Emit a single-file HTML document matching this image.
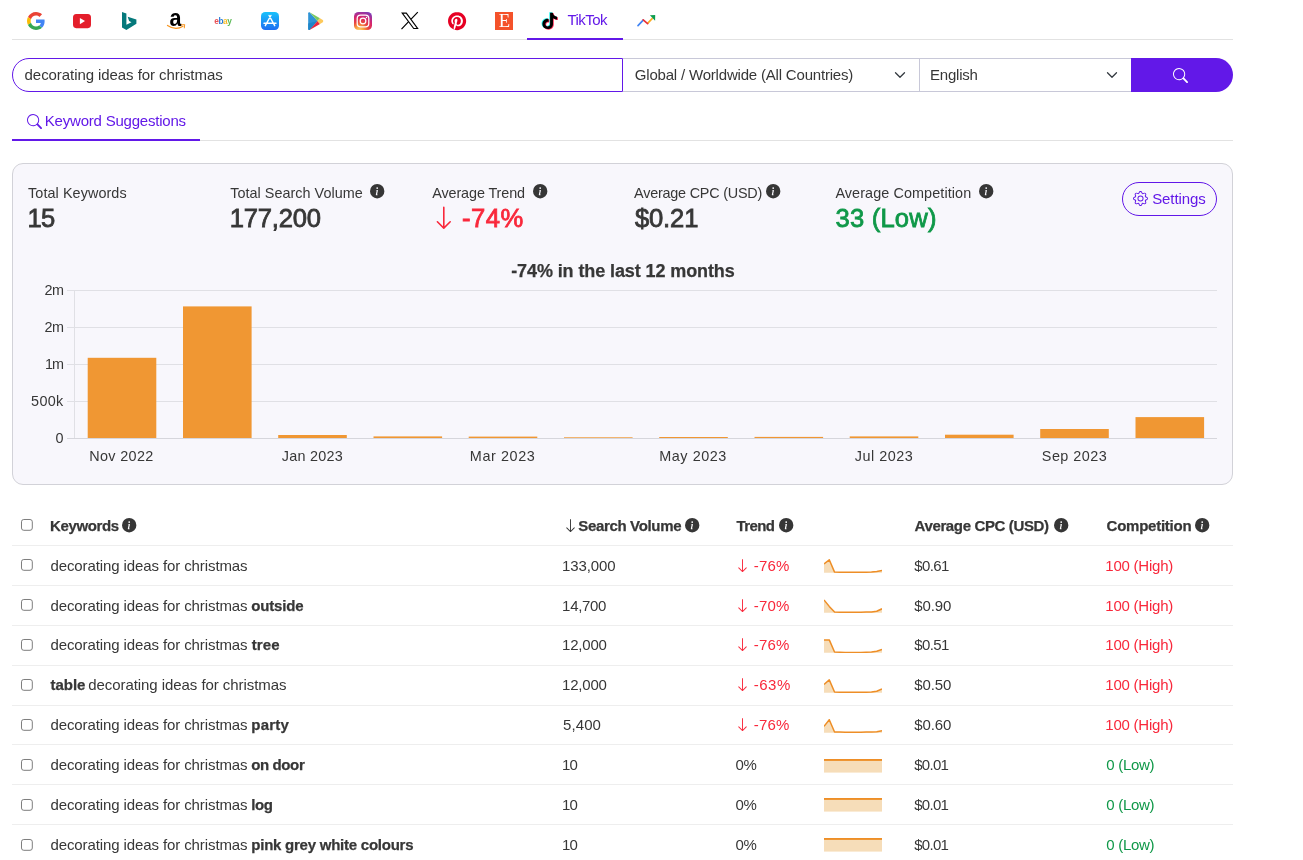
<!DOCTYPE html>
<html lang="en">
<head>
<meta charset="utf-8">
<title>Keyword Tool - TikTok</title>
<style>
html,body{margin:0;padding:0;background:#fff;}
body{will-change:transform;width:1303px;height:860px;position:relative;overflow:hidden;font-family:"Liberation Sans",Arial,sans-serif;color:#373737;}
.t{position:absolute;white-space:pre;line-height:20px;height:20px;}
.t b{font-weight:700;}
.big{-webkit-text-stroke:0.8px currentColor;}
.bd{-webkit-text-stroke:0.25px currentColor;}
.a{position:absolute;}
.ln{position:absolute;height:1px;background:#eeeeee;left:12px;width:1221px;}
svg{position:absolute;overflow:visible;}
</style>
</head>
<body>

<nav class="sources">
<div class="a" style="left:12px;top:39px;width:1221px;height:1px;background:#e2e2e2"></div>
<div class="a" style="left:527px;top:38px;width:96px;height:2px;background:#6218e8"></div>
<svg style="left:27px;top:12px" width="18" height="18" viewBox="0 0 48 48"><path fill="#EA4335" d="M24 9.5c3.54 0 6.71 1.22 9.21 3.6l6.85-6.85C35.9 2.38 30.47 0 24 0 14.62 0 6.51 5.38 2.56 13.22l7.98 6.19C12.43 13.72 17.74 9.5 24 9.5z"/><path fill="#4285F4" d="M46.98 24.55c0-1.57-.15-3.09-.38-4.55H24v9.02h12.94c-.58 2.96-2.26 5.48-4.78 7.18l7.73 6c4.51-4.18 7.09-10.36 7.09-17.65z"/><path fill="#FBBC05" d="M10.53 28.59c-.48-1.45-.76-2.99-.76-4.59s.27-3.14.76-4.59l-7.98-6.19C.92 16.46 0 20.12 0 24c0 3.88.92 7.54 2.56 10.78l7.97-6.19z"/><path fill="#34A853" d="M24 48c6.48 0 11.93-2.13 15.89-5.81l-7.73-6c-2.15 1.45-4.92 2.3-8.16 2.3-6.26 0-11.57-4.22-13.47-9.91l-7.98 6.19C6.51 42.62 14.62 48 24 48z"/></svg>
<svg style="left:73px;top:13.8px" width="18" height="14.2" viewBox="0 0 18 14.2"><rect x="0" y="0" width="18" height="14.2" rx="3.2" ry="3.6" fill="#e41e2b"/><path d="M6.9 3.9 L12 7.1 L6.9 10.3 Z" fill="#fff"/></svg>
<svg style="left:121.7px;top:11.8px" width="14.4" height="18" viewBox="0 0 14.4 18"><path fill="#05797b" d="M0 0 L4.4 1.6 L4.4 12.8 L9.5 10.2 L7.1 9 L5.7 4.8 L14.4 7.55 L14.4 11.85 L4.4 18 L0 15.5 Z"/></svg>
<svg style="left:167px;top:10px" width="18" height="20" viewBox="0 0 18 20"><text x="2.6" y="16.1" font-family="'Liberation Sans',Arial,sans-serif" font-weight="700" font-size="24" fill="#000" textLength="12" lengthAdjust="spacingAndGlyphs">a</text><path d="M0.5 15.4 Q8.5 20.8 16 16.2" fill="none" stroke="#f7941d" stroke-width="1.2" stroke-linecap="round"/><path d="M14.4 14.9 L17.7 14.6 L17.3 17.9" fill="none" stroke="#f7941d" stroke-width="1" stroke-linecap="round" stroke-linejoin="round"/></svg>
<svg style="left:213.5px;top:14.5px" width="20" height="14" viewBox="0 0 20 14"><text y="9.1" font-family="'Liberation Sans',Arial,sans-serif" font-weight="700" font-size="8.3" letter-spacing="-0.45" fill-opacity="0.85"><tspan x="0.3" fill="#e53238">e</tspan><tspan fill="#0064d2">b</tspan><tspan fill="#f5af02">a</tspan><tspan fill="#3bab35">y</tspan></text></svg>
<svg style="left:261px;top:12px" width="18" height="18" viewBox="0 0 18 18"><defs><linearGradient id="gas" x1="0" y1="0" x2="0" y2="1"><stop offset="0" stop-color="#19c2fb"/><stop offset="1" stop-color="#1d6ef2"/></linearGradient></defs><rect width="18" height="18" rx="4.2" fill="url(#gas)"/><path d="M9.9 3.5 L4.3 13.7 M8.1 3.5 L13.7 13.7 M3 11.2 H15" fill="none" stroke="#fff" stroke-width="1.45" stroke-linecap="round"/></svg>
<svg style="left:308.3px;top:11.8px" width="15.4" height="18.2" viewBox="0 0 15.4 18.2"><path d="M0.2 1.2 Q0.2 0 1.6 0.3 L9.5 9.1 L1.6 17.9 Q0.2 18.2 0.2 17 Z" fill="#2e93d6"/><path d="M0.2 11.5 L9.5 9.1 L1.6 17.9 Q0.2 18.2 0.2 17 Z" fill="#1f86c9"/><path d="M1.6 0.3 L12 6.3 L9.5 9.1 Z" fill="#7cc95f"/><path d="M1.6 17.9 L12 11.9 L9.5 9.1 Z" fill="#e8253d"/><path d="M12 6.3 L14.8 8 Q15.8 9.1 14.8 10.2 L12 11.9 L9.5 9.1 Z" fill="#fdc95a"/></svg>
<svg style="left:354px;top:12px" width="18" height="18" viewBox="0 0 18 18"><defs><radialGradient id="gig" cx="0.3" cy="1.05" r="1.15"><stop offset="0" stop-color="#fed576"/><stop offset="0.22" stop-color="#f9a13f"/><stop offset="0.45" stop-color="#e8443f"/><stop offset="0.68" stop-color="#d5246f"/><stop offset="1" stop-color="#7c3bb8"/></radialGradient></defs><rect width="18" height="18" rx="4.6" fill="url(#gig)"/><rect x="3.2" y="3.2" width="11.6" height="11.6" rx="3.3" fill="none" stroke="#fff" stroke-width="1.25"/><circle cx="9" cy="9" r="2.85" fill="none" stroke="#fff" stroke-width="1.25"/><circle cx="12.5" cy="5.5" r="0.75" fill="#fff"/></svg>
<svg style="left:401px;top:12px" width="18" height="18" viewBox="0 0 18 18"><path d="M16.8 0.2 L10.1 7.1 M0.5 17.2 L7.6 9.6" stroke="#000" stroke-width="1.2" fill="none"/><path d="M1.2 1.14 L5.3 1.14 L16.6 16.5 L12.7 16.5 Z" fill="#fff" stroke="#000" stroke-width="1.15" stroke-linejoin="miter"/></svg>
<svg style="left:447.9px;top:11.8px" width="18.2" height="18.2" viewBox="0 0 24 24"><circle cx="12" cy="12" r="11.9" fill="#fff"/><path fill="#e60023" d="M12.017 0C5.396 0 .029 5.367.029 11.987c0 5.079 3.158 9.417 7.618 11.162-.105-.949-.199-2.403.041-3.439.219-.937 1.406-5.957 1.406-5.957s-.359-.72-.359-1.781c0-1.663.967-2.911 2.168-2.911 1.024 0 1.518.769 1.518 1.688 0 1.029-.653 2.567-.992 3.992-.285 1.193.6 2.165 1.775 2.165 2.128 0 3.768-2.245 3.768-5.487 0-2.861-2.063-4.869-5.008-4.869-3.41 0-5.409 2.562-5.409 5.199 0 1.033.394 2.143.889 2.741.099.12.112.225.085.345-.09.375-.293 1.199-.334 1.363-.053.225-.172.271-.401.165-1.495-.69-2.433-2.878-2.433-4.646 0-3.776 2.748-7.252 7.92-7.252 4.158 0 7.392 2.967 7.392 6.923 0 4.135-2.607 7.462-6.233 7.462-1.214 0-2.354-.629-2.758-1.379l-.749 2.848c-.269 1.045-1.004 2.352-1.498 3.146 1.123.345 2.306.535 3.55.535 6.607 0 11.985-5.365 11.985-11.987C23.97 5.39 18.592.026 11.985.026L12.017 0z"/></svg>
<svg style="left:495px;top:12px" width="18" height="18" viewBox="0 0 18 18"><rect width="18" height="18" fill="#f4522a"/><text x="3.7" y="14.9" font-family="'Liberation Serif','DejaVu Serif',serif" font-size="18" fill="#fff" textLength="11.4" lengthAdjust="spacingAndGlyphs">E</text></svg>
<svg style="left:541.8px;top:12px" width="16.2" height="17.8" viewBox="1.8 -0.4 21.4 24.8" preserveAspectRatio="none"><g transform="translate(12.5,12) scale(0.93,0.95) translate(-12.5,-12)"><path d="M12.525.02c1.31-.02 2.61-.01 3.91-.02.08 1.53.63 3.09 1.75 4.17 1.12 1.11 2.7 1.62 4.24 1.79v4.03c-1.44-.05-2.89-.35-4.2-.97-.57-.26-1.1-.59-1.62-.93-.01 2.92.01 5.84-.02 8.75-.08 1.4-.54 2.79-1.35 3.94-1.31 1.92-3.58 3.17-5.91 3.21-1.43.08-2.86-.31-4.08-1.03-2.02-1.19-3.44-3.37-3.65-5.71-.02-.5-.03-1-.01-1.49.18-1.9 1.12-3.72 2.58-4.96 1.66-1.44 3.98-2.13 6.15-1.72.02 1.48-.04 2.96-.04 4.44-.99-.32-2.15-.23-3.02.37-.63.41-1.11 1.04-1.36 1.75-.21.51-.15 1.07-.14 1.61.24 1.64 1.82 3.02 3.5 2.87 1.12-.01 2.19-.66 2.77-1.61.19-.33.4-.67.41-1.06.1-1.79.06-3.57.07-5.36.01-4.03-.01-8.05.02-12.07z" fill="#25f4ee" transform="translate(-1.15,-0.85)"/><path d="M12.525.02c1.31-.02 2.61-.01 3.91-.02.08 1.53.63 3.09 1.75 4.17 1.12 1.11 2.7 1.62 4.24 1.79v4.03c-1.44-.05-2.89-.35-4.2-.97-.57-.26-1.1-.59-1.62-.93-.01 2.92.01 5.84-.02 8.75-.08 1.4-.54 2.79-1.35 3.94-1.31 1.92-3.58 3.17-5.91 3.21-1.43.08-2.86-.31-4.08-1.03-2.02-1.19-3.44-3.37-3.65-5.71-.02-.5-.03-1-.01-1.49.18-1.9 1.12-3.72 2.58-4.96 1.66-1.44 3.98-2.13 6.15-1.72.02 1.48-.04 2.96-.04 4.44-.99-.32-2.15-.23-3.02.37-.63.41-1.11 1.04-1.36 1.75-.21.51-.15 1.07-.14 1.61.24 1.64 1.82 3.02 3.5 2.87 1.12-.01 2.19-.66 2.77-1.61.19-.33.4-.67.41-1.06.1-1.79.06-3.57.07-5.36.01-4.03-.01-8.05.02-12.07z" fill="#fe2c55" transform="translate(1.15,0.85)"/><path d="M12.525.02c1.31-.02 2.61-.01 3.91-.02.08 1.53.63 3.09 1.75 4.17 1.12 1.11 2.7 1.62 4.24 1.79v4.03c-1.44-.05-2.89-.35-4.2-.97-.57-.26-1.1-.59-1.62-.93-.01 2.92.01 5.84-.02 8.75-.08 1.4-.54 2.79-1.35 3.94-1.31 1.92-3.58 3.17-5.91 3.21-1.43.08-2.86-.31-4.08-1.03-2.02-1.19-3.44-3.37-3.65-5.71-.02-.5-.03-1-.01-1.49.18-1.9 1.12-3.72 2.58-4.96 1.66-1.44 3.98-2.13 6.15-1.72.02 1.48-.04 2.96-.04 4.44-.99-.32-2.15-.23-3.02.37-.63.41-1.11 1.04-1.36 1.75-.21.51-.15 1.07-.14 1.61.24 1.64 1.82 3.02 3.5 2.87 1.12-.01 2.19-.66 2.77-1.61.19-.33.4-.67.41-1.06.1-1.79.06-3.57.07-5.36.01-4.03-.01-8.05.02-12.07z" fill="#000"/></g></svg>
<svg style="left:636px;top:14px" width="20" height="14" viewBox="636 14 20 14"><path d="M638 25.6 L643.2 20.1" stroke="#4285f4" stroke-width="1.7" stroke-linecap="round"/><path d="M647.6 23.4 L652.6 18.2" stroke="#fbab23" stroke-width="1.7"/><path d="M643.2 19.8 L647.6 23.6" stroke="#ea3338" stroke-width="1.7" stroke-linecap="round"/><path d="M649.9 15.2 L655.2 15.1 L655.1 20.8 Z" fill="#0d9d4e"/></svg>

<div class="t" style="left:567.5px;top:10.2px;font-size:15px;color:#6218e8;letter-spacing:-0.54px;">TikTok</div>
</nav>
<div class="searchbar">
<div class="a" style="left:623px;top:58px;width:296px;height:32px;border:1px solid #c8c8d8;border-left:none;background:#fff"></div>
<div class="a" style="left:919px;top:58px;width:212px;height:32px;border:1px solid #c8c8d8;border-right:none;background:#fff"></div>
<div class="a" style="left:12px;top:58px;width:609px;height:32px;border:1px solid #6218e8;border-radius:17px 0 0 17px;background:#fff"></div>
<div class="a" style="left:1131px;top:58px;width:102px;height:34px;background:#6218e8;border-radius:0 17px 17px 0"></div>
<svg style="left:894.2px;top:68.8px" width="12" height="12" viewBox="0 0 16 16"><path d="m2 5 6 6 6-6" fill="none" stroke="#343a40" stroke-width="1.7" stroke-linecap="round" stroke-linejoin="round"/></svg>
<svg style="left:1106.4px;top:68.8px" width="12" height="12" viewBox="0 0 16 16"><path d="m2 5 6 6 6-6" fill="none" stroke="#343a40" stroke-width="1.7" stroke-linecap="round" stroke-linejoin="round"/></svg>
<svg style="left:1172.7px;top:67.7px" width="15" height="15" viewBox="0 0 16 16" fill="#fff"><path d="M11.742 10.344a6.5 6.5 0 1 0-1.397 1.398h-.001c.03.04.062.078.098.115l3.85 3.85a1 1 0 0 0 1.415-1.414l-3.85-3.85a1.007 1.007 0 0 0-.115-.1zM12 6.5a5.5 5.5 0 1 1-11 0 5.5 5.5 0 0 1 11 0z"/></svg>
<div class="t" style="left:24.6px;top:65.3px;font-size:15px;letter-spacing:-0.07px;">decorating ideas for christmas</div>
<div class="t" style="left:634.8px;top:65.3px;font-size:15px;letter-spacing:-0.19px;">Global / Worldwide (All Countries)</div>
<div class="t" style="left:930.1px;top:65.3px;font-size:15px;letter-spacing:-0.24px;">English</div>
</div>
<div class="tabs">
<div class="a" style="left:12px;top:140px;width:1221px;height:1px;background:#e2e2e2"></div>
<div class="a" style="left:12px;top:139px;width:188px;height:2px;background:#6218e8"></div>
<svg style="left:26.9px;top:113.8px" width="15" height="15" viewBox="0 0 16 16" fill="#6218e8"><path d="M11.742 10.344a6.5 6.5 0 1 0-1.397 1.398h-.001c.03.04.062.078.098.115l3.85 3.85a1 1 0 0 0 1.415-1.414l-3.85-3.85a1.007 1.007 0 0 0-.115-.1zM12 6.5a5.5 5.5 0 1 1-11 0 5.5 5.5 0 0 1 11 0z"/></svg>
<div class="t" style="left:44.8px;top:111.0px;font-size:15px;color:#6218e8;letter-spacing:-0.21px;">Keyword Suggestions</div>
</div>
<section class="summary">
<div class="a" style="left:12px;top:163px;width:1219px;height:320px;border:1px solid #d2d2d8;border-radius:11px;background:#f8f7fc"></div>
<div class="a" style="left:1122px;top:182px;width:93px;height:32px;border:1px solid #6218e8;border-radius:17px"></div>
<svg style="left:1133.2px;top:191.1px" width="15" height="15" viewBox="0 0 16 16" fill="#6218e8"><path d="M8 4.754a3.246 3.246 0 1 0 0 6.492 3.246 3.246 0 0 0 0-6.492zM5.754 8a2.246 2.246 0 1 1 4.492 0 2.246 2.246 0 0 1-4.492 0z"/><path d="M9.796 1.343c-.527-1.79-3.065-1.79-3.592 0l-.094.319a.873.873 0 0 1-1.255.52l-.292-.16c-1.64-.892-3.433.902-2.54 2.541l.159.292a.873.873 0 0 1-.52 1.255l-.319.094c-1.79.527-1.79 3.065 0 3.592l.319.094a.873.873 0 0 1 .52 1.255l-.16.292c-.892 1.64.901 3.434 2.541 2.54l.292-.159a.873.873 0 0 1 1.255.52l.094.319c.527 1.79 3.065 1.79 3.592 0l.094-.319a.873.873 0 0 1 1.255-.52l.292.16c1.64.893 3.434-.902 2.54-2.541l-.159-.292a.873.873 0 0 1 .52-1.255l.319-.094c1.79-.527 1.79-3.065 0-3.592l-.319-.094a.873.873 0 0 1-.52-1.255l.16-.292c.893-1.64-.902-3.433-2.541-2.54l-.292.159a.873.873 0 0 1-1.255-.52l-.094-.319zm-2.633.283c.246-.835 1.428-.835 1.674 0l.094.319a1.873 1.873 0 0 0 2.693 1.115l.291-.16c.764-.415 1.6.42 1.184 1.185l-.159.292a1.873 1.873 0 0 0 1.116 2.692l.318.094c.835.246.835 1.428 0 1.674l-.319.094a1.873 1.873 0 0 0-1.115 2.693l.16.291c.415.764-.42 1.6-1.185 1.184l-.291-.159a1.873 1.873 0 0 0-2.693 1.116l-.094.318c-.246.835-1.428.835-1.674 0l-.094-.319a1.873 1.873 0 0 0-2.692-1.115l-.292.16c-.764.415-1.6-.42-1.184-1.185l.159-.291A1.873 1.873 0 0 0 1.945 8.93l-.319-.094c-.835-.246-.835-1.428 0-1.674l.319-.094A1.873 1.873 0 0 0 3.06 4.377l-.16-.292c-.415-.764.42-1.6 1.185-1.184l.292.159a1.873 1.873 0 0 0 2.692-1.115l.094-.319z"/></svg>

<svg style="left:431.2px;top:204.8px" width="25.6" height="25.6" viewBox="0 0 16 16" fill="#f9283b"><path d="M8 1a.5.5 0 0 1 .5.5v11.793l3.146-3.147a.5.5 0 0 1 .708.708l-4 4a.5.5 0 0 1-.708 0l-4-4a.5.5 0 0 1 .708-.708L7.5 13.293V1.5A.5.5 0 0 1 8 1z"/></svg>
<svg style="left:369.8px;top:184.3px" width="14.4" height="14.4" viewBox="0 0 16 16" fill="#363636"><path d="M8 16A8 8 0 1 0 8 0a8 8 0 0 0 0 16zm.93-9.412-1 4.705c-.07.34.029.533.304.533.194 0 .487-.07.686-.246l-.088.416c-.287.346-.92.598-1.465.598-.703 0-1.002-.422-.808-1.319l.738-3.468c.064-.293.006-.399-.287-.47l-.451-.081.082-.381 2.29-.287zM8 5.500a1 1 0 1 1 0-2 1 1 0 0 1 0 2z"/></svg>
<svg style="left:532.8px;top:184.3px" width="14.4" height="14.4" viewBox="0 0 16 16" fill="#363636"><path d="M8 16A8 8 0 1 0 8 0a8 8 0 0 0 0 16zm.93-9.412-1 4.705c-.07.34.029.533.304.533.194 0 .487-.07.686-.246l-.088.416c-.287.346-.92.598-1.465.598-.703 0-1.002-.422-.808-1.319l.738-3.468c.064-.293.006-.399-.287-.47l-.451-.081.082-.381 2.29-.287zM8 5.500a1 1 0 1 1 0-2 1 1 0 0 1 0 2z"/></svg>
<svg style="left:766.0px;top:184.3px" width="14.4" height="14.4" viewBox="0 0 16 16" fill="#363636"><path d="M8 16A8 8 0 1 0 8 0a8 8 0 0 0 0 16zm.93-9.412-1 4.705c-.07.34.029.533.304.533.194 0 .487-.07.686-.246l-.088.416c-.287.346-.92.598-1.465.598-.703 0-1.002-.422-.808-1.319l.738-3.468c.064-.293.006-.399-.287-.47l-.451-.081.082-.381 2.29-.287zM8 5.500a1 1 0 1 1 0-2 1 1 0 0 1 0 2z"/></svg>
<svg style="left:979.0px;top:184.3px" width="14.4" height="14.4" viewBox="0 0 16 16" fill="#363636"><path d="M8 16A8 8 0 1 0 8 0a8 8 0 0 0 0 16zm.93-9.412-1 4.705c-.07.34.029.533.304.533.194 0 .487-.07.686-.246l-.088.416c-.287.346-.92.598-1.465.598-.703 0-1.002-.422-.808-1.319l.738-3.468c.064-.293.006-.399-.287-.47l-.451-.081.082-.381 2.29-.287zM8 5.500a1 1 0 1 1 0-2 1 1 0 0 1 0 2z"/></svg>

<svg style="left:0;top:0" width="1303" height="500" viewBox="0 0 1303 500"><rect x="67" y="290" width="1150" height="1" fill="#e0e0e5"/><rect x="67" y="327" width="1150" height="1" fill="#e0e0e5"/><rect x="67" y="364" width="1150" height="1" fill="#e0e0e5"/><rect x="67" y="401" width="1150" height="1" fill="#e0e0e5"/><rect x="74" y="290" width="1" height="148" fill="#e0e0e5"/><rect x="67" y="438" width="1150" height="1" fill="#d6d6dc"/><rect x="87.7" y="357.8" width="68.6" height="80.2" fill="#f09733"/><rect x="183.0" y="306.4" width="68.6" height="131.6" fill="#f09733"/><rect x="278.2" y="435.0" width="68.6" height="3.0" fill="#f09733"/><rect x="373.5" y="436.4" width="68.6" height="1.6" fill="#f09733"/><rect x="468.7" y="436.6" width="68.6" height="1.4" fill="#f09733"/><rect x="564.0" y="437.3" width="68.6" height="0.7" fill="#f09733"/><rect x="659.2" y="437.0" width="68.6" height="1.0" fill="#f09733"/><rect x="754.5" y="436.9" width="68.6" height="1.1" fill="#f09733"/><rect x="849.7" y="436.4" width="68.6" height="1.6" fill="#f09733"/><rect x="945.0" y="434.7" width="68.6" height="3.3" fill="#f09733"/><rect x="1040.2" y="429.0" width="68.6" height="9.0" fill="#f09733"/><rect x="1135.5" y="417.1" width="68.6" height="20.9" fill="#f09733"/></svg>
<div class="t" style="left:28.1px;top:182.9px;font-size:14.4px;letter-spacing:0.07px;">Total Keywords</div>
<div class="t big" style="left:27.6px;top:207.9px;font-size:25.6px;letter-spacing:-0.73px;">15</div>
<div class="t" style="left:230.2px;top:182.9px;font-size:14.4px;letter-spacing:0.03px;">Total Search Volume</div>
<div class="t big" style="left:229.7px;top:207.9px;font-size:25.6px;letter-spacing:-0.21px;">177,200</div>
<div class="t" style="left:432.2px;top:182.9px;font-size:14.4px;letter-spacing:-0.10px;">Average Trend</div>
<div class="t big" style="left:462.1px;top:207.9px;font-size:25.6px;color:#f9283b;letter-spacing:0.50px;">-74%</div>
<div class="t" style="left:634.1px;top:182.9px;font-size:14.4px;letter-spacing:-0.22px;">Average CPC (USD)</div>
<div class="t big" style="left:634.9px;top:207.9px;font-size:25.6px;letter-spacing:-0.13px;">$0.21</div>
<div class="t" style="left:835.4px;top:182.9px;font-size:14.4px;letter-spacing:0.09px;">Average Competition</div>
<div class="t big" style="left:835.6px;top:207.9px;font-size:25.6px;color:#0f9848;letter-spacing:0.18px;">33 (Low)</div>
<div class="t" style="left:1152.2px;top:188.5px;font-size:15px;color:#6218e8;letter-spacing:-0.09px;">Settings</div>
<div class="t bd" style="left:511.2px;top:260.6px;font-size:18px;font-weight:700;letter-spacing:-0.10px;">-74% in the last 12 months</div>
<div class="t" style="left:44.6px;top:280.3px;font-size:14.4px;letter-spacing:-0.51px;">2m</div>
<div class="t" style="left:44.6px;top:317.3px;font-size:14.4px;letter-spacing:-0.51px;">2m</div>
<div class="t" style="left:45.1px;top:354.3px;font-size:14.4px;letter-spacing:-1.01px;">1m</div>
<div class="t" style="left:31.1px;top:391.3px;font-size:14.4px;letter-spacing:0.33px;">500k</div>
<div class="t" style="left:55.6px;top:428.3px;font-size:14.4px;">0</div>
<div class="t" style="left:89.3px;top:446.0px;font-size:14.4px;letter-spacing:0.34px;">Nov 2022</div>
<div class="t" style="left:281.8px;top:446.0px;font-size:14.4px;letter-spacing:0.26px;">Jan 2023</div>
<div class="t" style="left:469.8px;top:446.0px;font-size:14.4px;letter-spacing:0.60px;">Mar 2023</div>
<div class="t" style="left:659.3px;top:446.0px;font-size:14.4px;letter-spacing:0.54px;">May 2023</div>
<div class="t" style="left:854.8px;top:446.0px;font-size:14.4px;letter-spacing:0.51px;">Jul 2023</div>
<div class="t" style="left:1041.8px;top:446.0px;font-size:14.4px;letter-spacing:0.48px;">Sep 2023</div>
</section>
<div class="results">
<div class="ln" style="top:545px"></div>
<div class="ln" style="top:585px"></div>
<div class="ln" style="top:625px"></div>
<div class="ln" style="top:665px"></div>
<div class="ln" style="top:705px"></div>
<div class="ln" style="top:744px"></div>
<div class="ln" style="top:784px"></div>
<div class="ln" style="top:824px"></div>
<svg style="left:21.1px;top:519.3px" width="11.8" height="11.8" viewBox="0 0 11.8 11.8"><rect x="0.5" y="0.5" width="10.8" height="10.8" rx="2.3" fill="#fff" stroke="#7c7c7c" stroke-width="1"/></svg>
<svg style="left:21.1px;top:559.0px" width="11.8" height="11.8" viewBox="0 0 11.8 11.8"><rect x="0.5" y="0.5" width="10.8" height="10.8" rx="2.3" fill="#fff" stroke="#7c7c7c" stroke-width="1"/></svg>
<svg style="left:21.1px;top:599.0px" width="11.8" height="11.8" viewBox="0 0 11.8 11.8"><rect x="0.5" y="0.5" width="10.8" height="10.8" rx="2.3" fill="#fff" stroke="#7c7c7c" stroke-width="1"/></svg>
<svg style="left:21.1px;top:639.1px" width="11.8" height="11.8" viewBox="0 0 11.8 11.8"><rect x="0.5" y="0.5" width="10.8" height="10.8" rx="2.3" fill="#fff" stroke="#7c7c7c" stroke-width="1"/></svg>
<svg style="left:21.1px;top:678.9px" width="11.8" height="11.8" viewBox="0 0 11.8 11.8"><rect x="0.5" y="0.5" width="10.8" height="10.8" rx="2.3" fill="#fff" stroke="#7c7c7c" stroke-width="1"/></svg>
<svg style="left:21.1px;top:719.0px" width="11.8" height="11.8" viewBox="0 0 11.8 11.8"><rect x="0.5" y="0.5" width="10.8" height="10.8" rx="2.3" fill="#fff" stroke="#7c7c7c" stroke-width="1"/></svg>
<svg style="left:21.1px;top:758.5px" width="11.8" height="11.8" viewBox="0 0 11.8 11.8"><rect x="0.5" y="0.5" width="10.8" height="10.8" rx="2.3" fill="#fff" stroke="#7c7c7c" stroke-width="1"/></svg>
<svg style="left:21.1px;top:798.5px" width="11.8" height="11.8" viewBox="0 0 11.8 11.8"><rect x="0.5" y="0.5" width="10.8" height="10.8" rx="2.3" fill="#fff" stroke="#7c7c7c" stroke-width="1"/></svg>
<svg style="left:21.1px;top:838.5px" width="11.8" height="11.8" viewBox="0 0 11.8 11.8"><rect x="0.5" y="0.5" width="10.8" height="10.8" rx="2.3" fill="#fff" stroke="#7c7c7c" stroke-width="1"/></svg>
<svg style="left:122.1px;top:518.3px" width="14.4" height="14.4" viewBox="0 0 16 16" fill="#363636"><path d="M8 16A8 8 0 1 0 8 0a8 8 0 0 0 0 16zm.93-9.412-1 4.705c-.07.34.029.533.304.533.194 0 .487-.07.686-.246l-.088.416c-.287.346-.92.598-1.465.598-.703 0-1.002-.422-.808-1.319l.738-3.468c.064-.293.006-.399-.287-.47l-.451-.081.082-.381 2.29-.287zM8 5.500a1 1 0 1 1 0-2 1 1 0 0 1 0 2z"/></svg>
<svg style="left:685.3px;top:518.3px" width="14.4" height="14.4" viewBox="0 0 16 16" fill="#363636"><path d="M8 16A8 8 0 1 0 8 0a8 8 0 0 0 0 16zm.93-9.412-1 4.705c-.07.34.029.533.304.533.194 0 .487-.07.686-.246l-.088.416c-.287.346-.92.598-1.465.598-.703 0-1.002-.422-.808-1.319l.738-3.468c.064-.293.006-.399-.287-.47l-.451-.081.082-.381 2.29-.287zM8 5.500a1 1 0 1 1 0-2 1 1 0 0 1 0 2z"/></svg>
<svg style="left:778.9px;top:518.3px" width="14.4" height="14.4" viewBox="0 0 16 16" fill="#363636"><path d="M8 16A8 8 0 1 0 8 0a8 8 0 0 0 0 16zm.93-9.412-1 4.705c-.07.34.029.533.304.533.194 0 .487-.07.686-.246l-.088.416c-.287.346-.92.598-1.465.598-.703 0-1.002-.422-.808-1.319l.738-3.468c.064-.293.006-.399-.287-.47l-.451-.081.082-.381 2.29-.287zM8 5.500a1 1 0 1 1 0-2 1 1 0 0 1 0 2z"/></svg>
<svg style="left:1053.8px;top:518.3px" width="14.4" height="14.4" viewBox="0 0 16 16" fill="#363636"><path d="M8 16A8 8 0 1 0 8 0a8 8 0 0 0 0 16zm.93-9.412-1 4.705c-.07.34.029.533.304.533.194 0 .487-.07.686-.246l-.088.416c-.287.346-.92.598-1.465.598-.703 0-1.002-.422-.808-1.319l.738-3.468c.064-.293.006-.399-.287-.47l-.451-.081.082-.381 2.29-.287zM8 5.500a1 1 0 1 1 0-2 1 1 0 0 1 0 2z"/></svg>
<svg style="left:1195.4px;top:518.3px" width="14.4" height="14.4" viewBox="0 0 16 16" fill="#363636"><path d="M8 16A8 8 0 1 0 8 0a8 8 0 0 0 0 16zm.93-9.412-1 4.705c-.07.34.029.533.304.533.194 0 .487-.07.686-.246l-.088.416c-.287.346-.92.598-1.465.598-.703 0-1.002-.422-.808-1.319l.738-3.468c.064-.293.006-.399-.287-.47l-.451-.081.082-.381 2.29-.287zM8 5.500a1 1 0 1 1 0-2 1 1 0 0 1 0 2z"/></svg>
<svg style="left:562.5px;top:518.4px" width="15" height="15" viewBox="0 0 16 16" fill="#373737"><path d="M8 1a.5.5 0 0 1 .5.5v11.793l3.146-3.147a.5.5 0 0 1 .708.708l-4 4a.5.5 0 0 1-.708 0l-4-4a.5.5 0 0 1 .708-.708L7.5 13.293V1.5A.5.5 0 0 1 8 1z"/></svg>
<svg style="left:734.5px;top:558.3px" width="15" height="15" viewBox="0 0 16 16" fill="#f9283b"><path d="M8 1a.5.5 0 0 1 .5.5v11.793l3.146-3.147a.5.5 0 0 1 .708.708l-4 4a.5.5 0 0 1-.708 0l-4-4a.5.5 0 0 1 .708-.708L7.5 13.293V1.5A.5.5 0 0 1 8 1z"/></svg>
<svg style="left:824px;top:558.8px;overflow:hidden" width="58" height="14" viewBox="0 0 58 14"><polygon points="0,4.9 5.27,0.8 10.55,13.1 15.82,13.15 21.09,13.2 26.36,13.2 31.64,13.2 36.91,13.2 42.18,13.15 47.45,12.9 52.73,12.4 58,11.6 58,13.8 0,13.8" fill="#f6ddb9"/><polyline points="0,4.9 5.27,0.8 10.55,13.1 15.82,13.15 21.09,13.2 26.36,13.2 31.64,13.2 36.91,13.2 42.18,13.15 47.45,12.9 52.73,12.4 58,11.6" fill="none" stroke="#ee8e26" stroke-width="1.5" stroke-linejoin="round"/></svg>
<svg style="left:734.5px;top:598.3px" width="15" height="15" viewBox="0 0 16 16" fill="#f9283b"><path d="M8 1a.5.5 0 0 1 .5.5v11.793l3.146-3.147a.5.5 0 0 1 .708.708l-4 4a.5.5 0 0 1-.708 0l-4-4a.5.5 0 0 1 .708-.708L7.5 13.293V1.5A.5.5 0 0 1 8 1z"/></svg>
<svg style="left:824px;top:598.9px;overflow:hidden" width="58" height="14" viewBox="0 0 58 14"><polygon points="0,0.9 5.27,7.4 10.55,13.1 15.82,13.25 21.09,13.3 26.36,13.3 31.64,13.3 36.91,13.25 42.18,13.1 47.45,12.9 52.73,12.3 58,9.8 58,13.8 0,13.8" fill="#f6ddb9"/><polyline points="0,0.9 5.27,7.4 10.55,13.1 15.82,13.25 21.09,13.3 26.36,13.3 31.64,13.3 36.91,13.25 42.18,13.1 47.45,12.9 52.73,12.3 58,9.8" fill="none" stroke="#ee8e26" stroke-width="1.5" stroke-linejoin="round"/></svg>
<svg style="left:734.5px;top:637.4px" width="15" height="15" viewBox="0 0 16 16" fill="#f9283b"><path d="M8 1a.5.5 0 0 1 .5.5v11.793l3.146-3.147a.5.5 0 0 1 .708.708l-4 4a.5.5 0 0 1-.708 0l-4-4a.5.5 0 0 1 .708-.708L7.5 13.293V1.5A.5.5 0 0 1 8 1z"/></svg>
<svg style="left:824px;top:638.7px;overflow:hidden" width="58" height="14" viewBox="0 0 58 14"><polygon points="0,0.9 5.27,0.9 10.55,13 15.82,13.2 21.09,13.4 26.36,13.45 31.64,13.45 36.91,13.4 42.18,13.2 47.45,12.9 52.73,12.3 58,10.4 58,13.8 0,13.8" fill="#f6ddb9"/><polyline points="0,0.9 5.27,0.9 10.55,13 15.82,13.2 21.09,13.4 26.36,13.45 31.64,13.45 36.91,13.4 42.18,13.2 47.45,12.9 52.73,12.3 58,10.4" fill="none" stroke="#ee8e26" stroke-width="1.5" stroke-linejoin="round"/></svg>
<svg style="left:734.5px;top:677.4px" width="15" height="15" viewBox="0 0 16 16" fill="#f9283b"><path d="M8 1a.5.5 0 0 1 .5.5v11.793l3.146-3.147a.5.5 0 0 1 .708.708l-4 4a.5.5 0 0 1-.708 0l-4-4a.5.5 0 0 1 .708-.708L7.5 13.293V1.5A.5.5 0 0 1 8 1z"/></svg>
<svg style="left:824px;top:678.6px;overflow:hidden" width="58" height="14" viewBox="0 0 58 14"><polygon points="0,5.4 5.27,0.9 10.55,13 15.82,13.2 21.09,13.3 26.36,13.35 31.64,13.35 36.91,13.3 42.18,13.2 47.45,12.9 52.73,12.2 58,9.9 58,13.8 0,13.8" fill="#f6ddb9"/><polyline points="0,5.4 5.27,0.9 10.55,13 15.82,13.2 21.09,13.3 26.36,13.35 31.64,13.35 36.91,13.3 42.18,13.2 47.45,12.9 52.73,12.2 58,9.9" fill="none" stroke="#ee8e26" stroke-width="1.5" stroke-linejoin="round"/></svg>
<svg style="left:734.5px;top:717.2px" width="15" height="15" viewBox="0 0 16 16" fill="#f9283b"><path d="M8 1a.5.5 0 0 1 .5.5v11.793l3.146-3.147a.5.5 0 0 1 .708.708l-4 4a.5.5 0 0 1-.708 0l-4-4a.5.5 0 0 1 .708-.708L7.5 13.293V1.5A.5.5 0 0 1 8 1z"/></svg>
<svg style="left:824px;top:718.9px;overflow:hidden" width="58" height="14" viewBox="0 0 58 14"><polygon points="0,7.4 5.27,0.7 10.55,13 15.82,13.1 21.09,13.15 26.36,13.15 31.64,13.15 36.91,13.15 42.18,13.1 47.45,13 52.73,12.7 58,11.8 58,13.8 0,13.8" fill="#f6ddb9"/><polyline points="0,7.4 5.27,0.7 10.55,13 15.82,13.1 21.09,13.15 26.36,13.15 31.64,13.15 36.91,13.15 42.18,13.1 47.45,13 52.73,12.7 58,11.8" fill="none" stroke="#ee8e26" stroke-width="1.5" stroke-linejoin="round"/></svg>
<svg style="left:824px;top:759.1px" width="58" height="13.6" viewBox="0 0 58 13.6"><rect x="0" y="0.5" width="58" height="13.1" fill="#f6ddb9"/><rect x="0" y="0" width="58" height="1.9" fill="#ee8e26"/></svg>
<svg style="left:824px;top:798.1px" width="58" height="13.6" viewBox="0 0 58 13.6"><rect x="0" y="0.5" width="58" height="13.1" fill="#f6ddb9"/><rect x="0" y="0" width="58" height="1.9" fill="#ee8e26"/></svg>
<svg style="left:824px;top:838.2px" width="58" height="13.6" viewBox="0 0 58 13.6"><rect x="0" y="0.5" width="58" height="13.1" fill="#f6ddb9"/><rect x="0" y="0" width="58" height="1.9" fill="#ee8e26"/></svg>
<div class="thead">
<div class="t bd" style="left:50.1px;top:515.7px;font-size:15px;font-weight:700;letter-spacing:-0.39px;">Keywords</div>
<div class="t bd" style="left:578.3px;top:515.7px;font-size:15px;font-weight:700;letter-spacing:-0.34px;">Search Volume</div>
<div class="t bd" style="left:736.4px;top:515.7px;font-size:15px;font-weight:700;letter-spacing:-0.59px;">Trend</div>
<div class="t bd" style="left:914.5px;top:515.7px;font-size:15px;font-weight:700;letter-spacing:-0.36px;">Average CPC (USD)</div>
<div class="t bd" style="left:1106.6px;top:515.7px;font-size:15px;font-weight:700;letter-spacing:-0.25px;">Competition</div>
</div>
<div class="trow">
<div class="t" style="left:50.4px;top:555.9px;font-size:15px;letter-spacing:-0.10px;">decorating ideas for christmas</div>
<div class="t" style="left:562.1px;top:555.9px;font-size:15px;letter-spacing:-0.12px;">133,000</div>
<div class="t" style="left:753.8px;top:555.9px;font-size:15px;color:#f9283b;letter-spacing:0.14px;">-76%</div>
<div class="t" style="left:914.2px;top:555.9px;font-size:15px;letter-spacing:-0.58px;">$0.61</div>
<div class="t" style="left:1105.3px;top:555.9px;font-size:15px;color:#f9283b;letter-spacing:-0.23px;">100 (High)</div>
</div>
<div class="trow">
<div class="t" style="left:50.4px;top:595.9px;font-size:15px;letter-spacing:-0.10px;">decorating ideas for christmas</div>
<div class="t bd" style="left:251.2px;top:595.9px;font-size:15px;font-weight:700;letter-spacing:-0.17px;">outside</div>
<div class="t" style="left:562.1px;top:595.9px;font-size:15px;letter-spacing:-0.31px;">14,700</div>
<div class="t" style="left:753.8px;top:595.9px;font-size:15px;color:#f9283b;letter-spacing:0.14px;">-70%</div>
<div class="t" style="left:914.2px;top:595.9px;font-size:15px;letter-spacing:-0.08px;">$0.90</div>
<div class="t" style="left:1105.3px;top:595.9px;font-size:15px;color:#f9283b;letter-spacing:-0.23px;">100 (High)</div>
</div>
<div class="trow">
<div class="t" style="left:50.4px;top:635.0px;font-size:15px;letter-spacing:-0.10px;">decorating ideas for christmas</div>
<div class="t bd" style="left:251.7px;top:635.0px;font-size:15px;font-weight:700;letter-spacing:0.14px;">tree</div>
<div class="t" style="left:562.1px;top:635.0px;font-size:15px;letter-spacing:-0.21px;">12,000</div>
<div class="t" style="left:753.8px;top:635.0px;font-size:15px;color:#f9283b;letter-spacing:0.14px;">-76%</div>
<div class="t" style="left:914.2px;top:635.0px;font-size:15px;letter-spacing:-0.58px;">$0.51</div>
<div class="t" style="left:1105.3px;top:635.0px;font-size:15px;color:#f9283b;letter-spacing:-0.23px;">100 (High)</div>
</div>
<div class="trow">
<div class="t bd" style="left:50.6px;top:675.0px;font-size:15px;font-weight:700;letter-spacing:-0.04px;">table</div>
<div class="t" style="left:88.2px;top:675.0px;font-size:15px;letter-spacing:-0.06px;">decorating ideas for christmas</div>
<div class="t" style="left:562.1px;top:675.0px;font-size:15px;letter-spacing:-0.21px;">12,000</div>
<div class="t" style="left:753.8px;top:675.0px;font-size:15px;color:#f9283b;letter-spacing:0.47px;">-63%</div>
<div class="t" style="left:914.2px;top:675.0px;font-size:15px;letter-spacing:-0.08px;">$0.50</div>
<div class="t" style="left:1105.3px;top:675.0px;font-size:15px;color:#f9283b;letter-spacing:-0.23px;">100 (High)</div>
</div>
<div class="trow">
<div class="t" style="left:50.4px;top:714.8px;font-size:15px;letter-spacing:-0.10px;">decorating ideas for christmas</div>
<div class="t bd" style="left:251.3px;top:714.8px;font-size:15px;font-weight:700;letter-spacing:0.24px;">party</div>
<div class="t" style="left:563.1px;top:714.8px;font-size:15px;letter-spacing:0.07px;">5,400</div>
<div class="t" style="left:753.8px;top:714.8px;font-size:15px;color:#f9283b;letter-spacing:0.14px;">-76%</div>
<div class="t" style="left:914.2px;top:714.8px;font-size:15px;letter-spacing:-0.08px;">$0.60</div>
<div class="t" style="left:1105.3px;top:714.8px;font-size:15px;color:#f9283b;letter-spacing:-0.23px;">100 (High)</div>
</div>
<div class="trow">
<div class="t" style="left:50.4px;top:754.9px;font-size:15px;letter-spacing:-0.10px;">decorating ideas for christmas</div>
<div class="t bd" style="left:251.3px;top:754.9px;font-size:15px;font-weight:700;letter-spacing:-0.40px;">on door</div>
<div class="t" style="left:562.1px;top:754.9px;font-size:15px;letter-spacing:-0.84px;">10</div>
<div class="t" style="left:735.6px;top:754.9px;font-size:15px;letter-spacing:-0.35px;">0%</div>
<div class="t" style="left:914.2px;top:754.9px;font-size:15px;letter-spacing:-0.70px;">$0.01</div>
<div class="t" style="left:1106.3px;top:754.9px;font-size:15px;color:#0f9848;letter-spacing:-0.29px;">0 (Low)</div>
</div>
<div class="trow">
<div class="t" style="left:50.4px;top:794.9px;font-size:15px;letter-spacing:-0.10px;">decorating ideas for christmas</div>
<div class="t bd" style="left:251.2px;top:794.9px;font-size:15px;font-weight:700;letter-spacing:-0.42px;">log</div>
<div class="t" style="left:562.1px;top:794.9px;font-size:15px;letter-spacing:-0.84px;">10</div>
<div class="t" style="left:735.6px;top:794.9px;font-size:15px;letter-spacing:-0.35px;">0%</div>
<div class="t" style="left:914.2px;top:794.9px;font-size:15px;letter-spacing:-0.70px;">$0.01</div>
<div class="t" style="left:1106.3px;top:794.9px;font-size:15px;color:#0f9848;letter-spacing:-0.29px;">0 (Low)</div>
</div>
<div class="trow">
<div class="t" style="left:50.4px;top:834.8px;font-size:15px;letter-spacing:-0.10px;">decorating ideas for christmas</div>
<div class="t bd" style="left:251.3px;top:834.8px;font-size:15px;font-weight:700;letter-spacing:-0.24px;">pink grey white colours</div>
<div class="t" style="left:562.1px;top:834.8px;font-size:15px;letter-spacing:-0.84px;">10</div>
<div class="t" style="left:735.6px;top:834.8px;font-size:15px;letter-spacing:-0.35px;">0%</div>
<div class="t" style="left:914.2px;top:834.8px;font-size:15px;letter-spacing:-0.70px;">$0.01</div>
<div class="t" style="left:1106.3px;top:834.8px;font-size:15px;color:#0f9848;letter-spacing:-0.29px;">0 (Low)</div>
</div>
</div>
</body>
</html>
